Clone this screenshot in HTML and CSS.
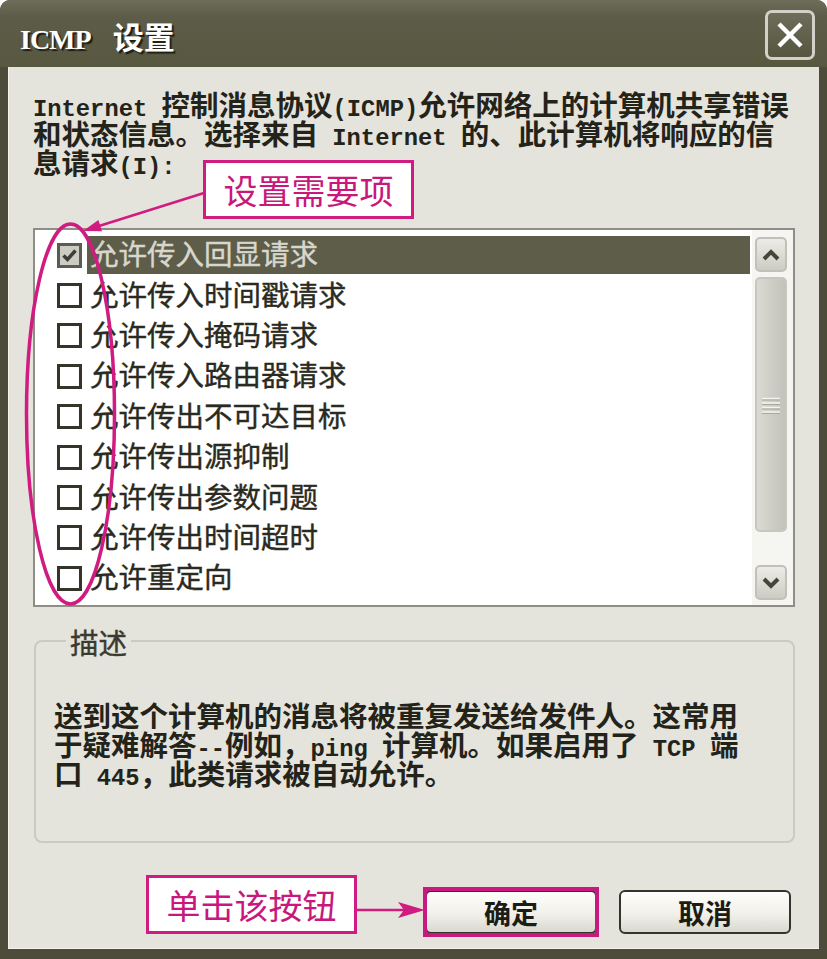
FILE: index.html
```html
<!DOCTYPE html>
<html lang="zh-CN">
<head>
<meta charset="utf-8">
<title>ICMP 设置</title>
<link rel="stylesheet" href="styles.css">
</head>
<body>
<div class="window">
  <div class="titlebar">
    <div class="title"><span class="title-lat">ICMP</span><span class="title-cjk">设置</span></div>
    <div class="close">
      <svg width="28" height="28" viewBox="0 0 28 28"><path d="M3 3 L25 25 M25 3 L3 25" stroke="#fff" stroke-width="4.5" fill="none"/></svg>
    </div>
  </div>
  <div class="client">
    <p class="intro">
      <span class="line"><span class="lat">Internet </span>控制消息协议<span class="lat">(ICMP)</span>允许网络上的计算机共享错误</span>
      <span class="line">和状态信息。选择来自<span class="lat"> Internet </span>的、此计算机将响应的信</span>
      <span class="line">息请求<span class="lat">(I):</span></span>
    </p>
    <div class="listbox">
      <ul class="items">
        <li class="item selected"><span class="cb checked"><svg width="19" height="19" viewBox="0 0 19 19"><path d="M3.5 9.5 L7.5 13.5 L15.5 4.5" stroke="#3d3d33" stroke-width="3.5" fill="none"/></svg></span><span class="label">允许传入回显请求</span></li>
        <li class="item"><span class="cb"></span><span class="label">允许传入时间戳请求</span></li>
        <li class="item"><span class="cb"></span><span class="label">允许传入掩码请求</span></li>
        <li class="item"><span class="cb"></span><span class="label">允许传入路由器请求</span></li>
        <li class="item"><span class="cb"></span><span class="label">允许传出不可达目标</span></li>
        <li class="item"><span class="cb"></span><span class="label">允许传出源抑制</span></li>
        <li class="item"><span class="cb"></span><span class="label">允许传出参数问题</span></li>
        <li class="item"><span class="cb"></span><span class="label">允许传出时间超时</span></li>
        <li class="item"><span class="cb"></span><span class="label">允许重定向</span></li>
      </ul>
      <div class="scrollbar">
        <div class="sb-btn"><svg width="20" height="14" viewBox="0 0 20 14"><polyline points="3,11 10,4 17,11" stroke="#45453a" stroke-width="4" fill="none"/></svg></div>
        <div class="thumb"><svg width="20" height="18" viewBox="0 0 20 18"><path d="M1 2.5 H19 M1 7 H19 M1 11.5 H19 M1 16 H19" stroke="#f4f4f0" stroke-width="1.5"/><path d="M1 4 H19 M1 8.5 H19 M1 13 H19 M1 17.5 H19" stroke="#a9a89f" stroke-width="1"/></svg></div>
        <div class="spacer"></div>
        <div class="sb-btn"><svg width="20" height="14" viewBox="0 0 20 14"><polyline points="3,3 10,10 17,3" stroke="#45453a" stroke-width="4" fill="none"/></svg></div>
      </div>
    </div>
    <fieldset class="group">
      <legend class="legend">描述</legend>
      <p class="desc">
        <span class="line">送到这个计算机的消息将被重复发送给发件人。这常用</span>
        <span class="line">于疑难解答<span class="lat">--</span>例如，<span class="lat">ping </span>计算机。如果启用了<span class="lat"> TCP </span>端</span>
        <span class="line">口<span class="lat"> 445</span>，此类请求被自动允许。</span>
      </p>
    </fieldset>
    <div class="buttons">
      <button class="btn" type="button">确定</button>
      <button class="btn" type="button">取消</button>
    </div>
  </div>
  <div class="callout callout-top">设置需要项</div>
  <div class="callout callout-bottom">单击该按钮</div>
  <div class="ok-mark"></div>
  <svg class="marks" width="827" height="959" viewBox="0 0 827 959">
    <ellipse cx="70.5" cy="414" rx="44" ry="190" fill="none" stroke="#d01c80" stroke-width="3.5"/>
    <line x1="204" y1="193" x2="99" y2="226" stroke="#d01c80" stroke-width="2.5"/>
    <polygon points="83,231 102,231.3 98.4,219.9" fill="#d01c80"/>
    <line x1="357" y1="910" x2="404" y2="910" stroke="#d01c80" stroke-width="2.5"/>
    <polygon points="425,910 398,902 404,910 398,918" fill="#d01c80"/>
  </svg>
</div>
</body>
</html>
```

FILE: styles.css
```css
* { box-sizing: border-box; }
html, body { margin: 0; padding: 0; background: #ffffff; }

.window {
  position: relative;
  width: 827px;
  height: 959px;
  background: #4d4c3b;
  border-radius: 10px 10px 0 0;
  display: flex;
  flex-direction: column;
  overflow: hidden;
}

.titlebar {
  height: 67px;
  flex: none;
  display: flex;
  align-items: center;
  justify-content: space-between;
  padding: 0 12px 0 20px;
  background: linear-gradient(#6e6d59, #5d5c49 25%, #58573f);
}
.title {
  color: #ffffff;
  font-weight: 700;
  text-shadow: 2px 2px 1px #1e1e16;
  display: flex;
  align-items: baseline;
  margin-top: 4px;
}
.title-lat { font-family: "Liberation Serif", serif; font-size: 28px; letter-spacing: -1px; }
.title-cjk { font-family: "Noto Sans CJK SC", sans-serif; font-size: 31px; margin-left: 22px; }

.close {
  width: 50px;
  height: 50px;
  border: 3px solid #d2d1c9;
  border-radius: 7px;
  background: linear-gradient(#6e6d5a, #56553f);
  display: flex;
  align-items: center;
  justify-content: center;
  margin-top: 2px;
}

.client {
  flex: 1;
  margin: 0 8px 10px;
  background: #e4e3dc;
  padding: 21.5px 24px 0 25px;
  display: flex;
  flex-direction: column;
  box-shadow: inset 1px 0 0 #f3f2ec, inset 0 -1px 0 #f3f2ec;
}

.intro, .desc {
  margin: 0;
  font-family: "Noto Sans CJK SC", sans-serif;
  font-weight: 700;
  font-size: 28.5px;
  line-height: 29px;
  color: #23231a;
}
.line { display: block; height: 29px; white-space: nowrap; }
.lat { font-family: "Liberation Mono", monospace; font-size: 23.8px; font-weight: 700; line-height: 1; }

.listbox {
  margin-top: 52.5px;
  height: 379px;
  flex: none;
  border: 2px solid #8f8e86;
  background: #ffffff;
  display: flex;
}
.items {
  list-style: none;
  margin: 0;
  padding: 5px 0 0 22px;
  flex: 1;
}
.item {
  height: 40.4px;
  display: flex;
  align-items: center;
}
.cb {
  flex: none;
  width: 25px;
  height: 25px;
  border: 3px solid #34342a;
  background: #ffffff;
  margin-right: 5px;
  display: flex;
  align-items: center;
  justify-content: center;
}
.cb.checked { border-color: #5c5b52; background: #cdccc4; }
.label {
  flex: 1;
  height: 38px;
  line-height: 34px;
  margin-right: 2px;
  padding-left: 3px;
  font-family: "Noto Sans CJK SC", sans-serif;
  font-weight: 400;
  font-size: 28.5px;
  color: #2a2a20;
  white-space: nowrap;
  -webkit-text-stroke: 0.4px #2a2a20;
}
.selected .label { background: #5e5d49; color: #d8d7cf; -webkit-text-stroke: 0.4px #d8d7cf; }

.scrollbar {
  width: 41px;
  flex: none;
  display: flex;
  flex-direction: column;
  padding: 7px 6px 5px 3px;
  background: #f5f5f1;
}
.sb-btn {
  height: 35px;
  flex: none;
  border: 2px solid #c2c1b9;
  border-radius: 5px;
  background: linear-gradient(#ecebe5, #cdccc4);
  display: flex;
  align-items: center;
  justify-content: center;
}
.thumb {
  height: 255px;
  flex: none;
  margin-top: 5px;
  border: 2px solid #c8c7bf;
  border-radius: 5px;
  background: linear-gradient(90deg, #dad9d2, #cfcec6 50%, #c4c3bb);
  display: flex;
  align-items: center;
  justify-content: center;
}
.spacer { flex: 1; }

.group {
  margin: 19.5px 0 0 1px;
  padding: 44px 18px 54.5px;
  border: 2px solid #cbcac2;
  border-radius: 8px;
  min-inline-size: 0;
}
.legend {
  margin-left: 12px;
  padding: 0 4px;
  font-family: "Noto Sans CJK SC", sans-serif;
  font-weight: 400;
  font-size: 28.5px;
  line-height: 29px;
  color: #3a3a30;
  -webkit-text-stroke: 0.4px #3a3a30;
}

.buttons {
  display: flex;
  justify-content: flex-end;
  gap: 22px;
  margin-top: 47px;
  padding-right: 4px;
}
.btn {
  width: 172px;
  height: 44px;
  padding: 0;
  border: 2px solid #34342b;
  border-radius: 6px;
  background: linear-gradient(#fdfdfb, #f1f0ea 55%, #d9d8d0);
  font-family: "Noto Sans CJK SC", sans-serif;
  font-weight: 700;
  font-size: 27px;
  color: #1c1c14;
  line-height: 1;
}

.callout {
  position: absolute;
  background: #ffffff;
  border: 3px solid #d01c80;
  color: #c8187b;
  font-family: "Noto Sans CJK SC", sans-serif;
  font-weight: 400;
  font-size: 34px;
  display: flex;
  align-items: center;
  justify-content: center;
}
.callout-top { left: 203px; top: 160px; width: 211px; height: 59px; }
.callout-bottom { left: 146px; top: 875px; width: 211px; height: 59px; }
.ok-mark {
  position: absolute;
  left: 423px;
  top: 887px;
  width: 176px;
  height: 50px;
  border: 4px solid #c81a7e;
}
.marks {
  position: absolute;
  left: 0;
  top: 0;
  pointer-events: none;
}
```
